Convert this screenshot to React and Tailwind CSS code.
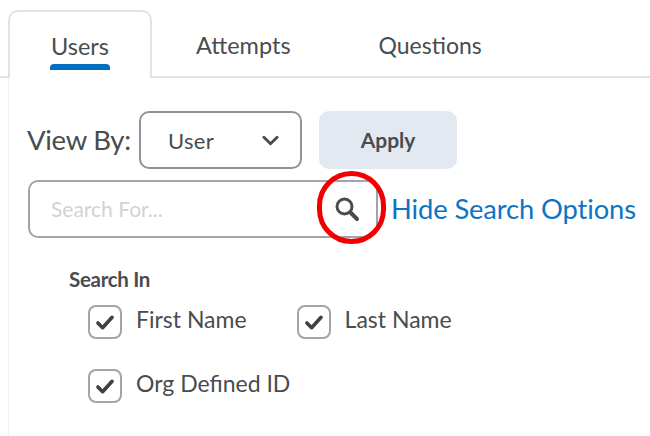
const labelText = "text-[#494c4e] text-[23px] leading-[28px]";

function CheckItem({ label }) {
  return (
    <label className="flex items-center gap-[14px]">
      <span className="w-[34px] h-[34px] rounded-[8px] border-2 border-[#a0a5aa] bg-white flex items-center justify-center">
        <svg width="20" height="17" viewBox="0 0 21 18" fill="none">
          <path d="M3 9.5 L8 14.5 L18 3.5" stroke="#3f4245" strokeWidth="3.8" strokeLinecap="round" strokeLinejoin="round" />
        </svg>
      </span>
      <span className={`${labelText} -mt-[7px]`}>{label}</span>
    </label>
  );
}

export default function App() {
  return (
    <div className="relative w-[650px] h-[436px] bg-white overflow-hidden font-['Lato','Open_Sans',sans-serif]">
      {/* tabs */}
      <div className="flex pt-[10px] pl-[8px] h-[78px] border-b-2 border-[#dfe3e8]">
        <div className="w-[144px] h-[68px] border-2 border-b-0 border-[#dfe3e8] rounded-t-[10px] bg-white flex flex-col items-center pt-[20px] relative z-10">
          <span className="text-[#494c4e] text-[23.5px] leading-[28px]">Users</span>
          <span className="w-[60px] h-[6px] mt-[4px] bg-[#006fbf] rounded-t-[4px]"></span>
        </div>
        <div className="pl-[44px] pt-[21px] text-[#494c4e] text-[23.5px] leading-[28px]">Attempts</div>
        <div className="pl-[88px] pt-[21px] text-[#494c4e] text-[23px] leading-[28px]">Questions</div>
      </div>

      <div className="ml-[8px] border-l border-[#eef0f3] pl-[18px] pt-[33px] h-[358px]">
        {/* view by row */}
        <div className="flex items-center">
          <span className="text-[#494c4e] text-[27.5px] leading-[34px] w-[112px] tracking-[-0.3px] whitespace-nowrap">View By:</span>
          <div className="w-[163px] h-[58px] rounded-[10px] border-2 border-[#8f9499] flex items-center justify-between pl-[27px] pr-[21px]">
            <span className="text-[#494c4e] text-[22px] tracking-[0.3px]">User</span>
            <svg width="17" height="11" viewBox="0 0 18 11" fill="none">
              <path d="M2 2 L9 9 L16 2" stroke="#494c4e" strokeWidth="3" strokeLinecap="round" strokeLinejoin="round" />
            </svg>
          </div>
          <button className="ml-[17px] w-[138px] h-[58px] rounded-[10px] bg-[#e3e9f1] text-[#494c4e] text-[21px] font-bold">Apply</button>
        </div>

        {/* search */}
        <div className="flex items-center mt-[11px] pl-[1px]">
          <div className="w-[350px] h-[58px] rounded-[10px] border-2 border-[#a0a5aa] flex items-center justify-between pl-[21px] pr-[16px]">
            <span className="text-[#d0d3d6] text-[21px]">Search For...</span>
            <svg width="26" height="26" viewBox="0 0 26 26" fill="none">
              <circle cx="10.5" cy="10.5" r="7.5" stroke="#494c4e" strokeWidth="3" />
              <path d="M16.5 16.5 L23 23" stroke="#494c4e" strokeWidth="4" strokeLinecap="round" />
            </svg>
          </div>
          <span className="ml-[13px] text-[#0d74c4] text-[27.3px] leading-[34px] whitespace-nowrap tracking-[-0.1px]">Hide Search Options</span>
        </div>

        {/* search in */}
        <div className="pl-[42px] pt-[28px]">
          <div className="text-[#494c4e] text-[20.5px] leading-[26px] font-bold tracking-[-0.3px]">Search In</div>
          <div className="pl-[19px] pt-[13px] flex flex-col gap-[30px]">
            <div className="flex gap-[50px]">
              <CheckItem label="First Name" />
              <CheckItem label="Last Name" />
            </div>
            <CheckItem label="Org Defined ID" />
          </div>
        </div>
      </div>

      {/* red annotation circle */}
      <div className="absolute left-[317px] top-[171px] w-[69px] h-[73px] rounded-full border-[5px] border-[#f00000]"></div>
    </div>
  );
}
